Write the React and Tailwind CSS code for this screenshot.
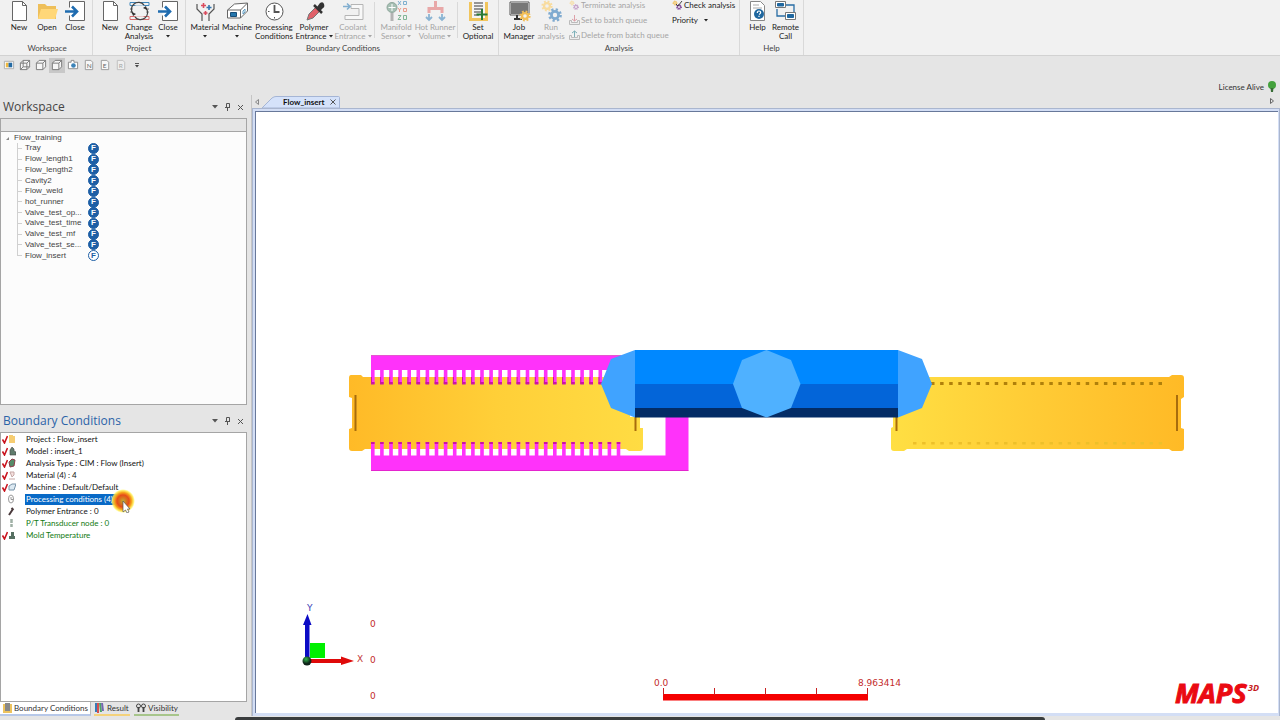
const sans = "font-['Lato','Open_Sans',sans-serif]";
const titleFont = "font-['Open_Sans','Noto_Sans',sans-serif]";

const models = [
  'Tray',
  'Flow_length1',
  'Flow_length2',
  'Cavity2',
  'Flow_weld',
  'hot_runner',
  'Valve_test_op...',
  'Valve_test_time',
  'Valve_test_mf',
  'Valve_test_se...',
  'Flow_insert'
];

const conditions = [
  { label: 'Project : Flow_insert', icon: 'folder', done: true },
  { label: 'Model : insert_1', icon: 'model', done: true },
  { label: 'Analysis Type : CIM : Flow (Insert)', icon: 'type', done: true },
  { label: 'Material (4) : 4', icon: 'material', done: true },
  { label: 'Machine : Default/Default', icon: 'machine', done: true },
  { label: 'Processing conditions (4) : 0', icon: 'clock', selected: true },
  { label: 'Polymer Entrance : 0', icon: 'dropper' },
  { label: 'P/T Transducer node : 0', icon: 'sensor', optional: true },
  { label: 'Mold Temperature', icon: 'mold', done: true, optional: true }
];

const Gear = ({ cx, cy, r, color, hole = '#f1f1f1' }) => (
  <g>
    <circle cx={cx} cy={cy} r={r} fill="none" stroke={color} strokeWidth={r * 0.5} strokeDasharray={`${r * 0.4} ${r * 0.385}`} />
    <circle cx={cx} cy={cy} r={r * 0.65} fill={hole} stroke={color} strokeWidth={r * 0.5} />
  </g>
);

const bigIcons = {
  page: (
    <g fill="#fff" stroke="#666">
      <path d="M4.500 1.500h10l4 4v15h-14z" />
      <path d="M14.500 1.500v4h4" fill="none" />
    </g>
  ),
  folder: (
    <g>
      <path d="M2 4h7l2 2h9v13H2z" fill="#eebf5a" />
      <path d="M5 9h17l-3 10H2z" fill="#ffd778" />
    </g>
  ),
  exit: (
    <g>
      <path d="M5.500 7.500v-6h15v19h-15v-5" fill="#fff" stroke="#666" />
      <path d="M1 11.500h11M8 6.500l5 5-5 5" fill="none" stroke="#1f6cb0" strokeWidth="2.600" />
    </g>
  ),
  change: (
    <g fill="none">
      <path d="M2 2.500h19v3H2z" stroke="#3f86ba" />
      <path d="M2 9h3M18 9h3M2 12h3M18 12h3" stroke="#777" />
      <path d="M2 16.500h19v3H2z" stroke="#d66c6c" />
      <circle cx="11.500" cy="11" r="7" fill="#f1f1f1" fillOpacity=".7" />
      <path d="M5 14a7 7 0 0 1 11-9M18 8a7 7 0 0 1-11 9" stroke="#444" strokeWidth="1.200" />
      <path d="M4 12l4 2-3 2zM19 10l-4-2 3-2z" fill="#333" />
    </g>
  ),
  material: (
    <g fill="none" stroke="#555">
      <path d="M3 4v5l5 5v7M20 4v5l-5 5v7" strokeWidth="1.200" />
      <path d="M9.500 3v5M7 5.500h5M11.500 11v4M9.500 13h4" stroke="#d94b5d" strokeWidth="1.600" />
      <path d="M15 5v5M12.500 7.500h5" stroke="#3275ad" strokeWidth="1.600" />
    </g>
  ),
  machine: (
    <g fill="#fff" stroke="#666">
      <path d="M1.500 10l7-6 13-1v8l-7 7h-13z" />
      <path d="M1.500 10h13v8M14.500 10l7-7" fill="none" />
      <path d="M4.500 12.500h6v4h-6z" fill="#2476ad" stroke="#174d78" />
      <path d="M17 11l2-2v3l-2 2z" stroke="#5e9cc2" />
    </g>
  ),
  clock: (
    <g fill="#fff" stroke="#555">
      <circle cx="11.500" cy="11.500" r="8.500" />
      <path d="M11.500 5v7h5" fill="none" strokeWidth="1.800" />
      <path d="M11.500 17v1.500M5 11.500h1.500" />
    </g>
  ),
  dropper: (
    <g>
      <path d="M4 20l2-6 7-7 4 4-7 7z" fill="#e0616a" stroke="#777" />
      <path d="M11 5l8 8" stroke="#333" strokeWidth="2.500" />
      <path d="M14 7l3-4q3-2 4 1t-1 4l-3 3z" fill="#333" />
    </g>
  ),
  coolant: (
    <g fill="none" stroke="#b5b5b5">
      <path d="M9 4.500h12v15H3v-4h14v-7H9z" fill="#f8f8f8" />
      <path d="M1 6.500h6M5 3.500l3 3-3 3" stroke="#82afd0" strokeWidth="1.600" />
    </g>
  ),
  manifold: (
    <g fill="none">
      <circle cx="7" cy="7.500" r="5" fill="#a5bfb3" stroke="#8fa79c" />
      <path d="M7 4v7M3.500 7.500h7" stroke="#fff" />
      <path d="M5.500 13h3v8h-3z" fill="#b3b3b3" />
      <path d="M13 1l3 4M16 1l-3 4M18.500 1.500h3v3h-3z" stroke="#7fb0ce" />
      <path d="M13 8l1.500 2L16 8M14.500 10v2M18.500 8.500h3v3h-3z" stroke="#e89c8c" />
      <path d="M13 15.500h3l-3 4h3M18.500 15.500h3v4h-3z" stroke="#82b596" />
    </g>
  ),
  runner: (
    <g fill="none">
      <path d="M11.500 1v7M5 13V8.500h13V13" stroke="#e8a8a8" strokeWidth="3" />
      <path d="M5 14v6M2 17l3 3 3-3M18 14v6M15 17l3 3 3-3" stroke="#8ab4d3" strokeWidth="1.800" />
    </g>
  ),
  optional: (
    <g>
      <path d="M2 2h19v19H2z" fill="#f1c55c" />
      <path d="M5 0h13v18H5z" fill="#f5f5f5" />
      <path d="M7 3h9M7 6h9M7 9h9M7 12h7M7 15h5" stroke="#777" strokeWidth="1.500" />
      <path d="M15 9v11M9.500 14.500h11" stroke="#287a35" strokeWidth="2" />
    </g>
  ),
  job: (
    <g>
      <path d="M2.500 2.500h18v12h-18z" fill="#777" stroke="#fff" />
      <path d="M2 2h19v13H2z" fill="none" stroke="#555" />
      <path d="M9 15v4M6 19h8" stroke="#333" strokeWidth="2" />
      <Gear cx={17} cy={16} r={4.5} color="#f3bf57" />
    </g>
  ),
  run: (
    <g>
      <Gear cx={7} cy={6} r={4.5} color="#f8dca0" />
      <Gear cx={15} cy={15} r={5.5} color="#80abd0" />
    </g>
  ),
  help: (
    <g>
      <path d="M4.500 1.500h10l4 4v15h-14z" fill="#fff" stroke="#888" />
      <path d="M7 5h6M7 8h9" stroke="#aaa" />
      <circle cx="13" cy="14" r="5" fill="#1f679f" />
      <path d="M11.300 13q0-2 1.700-2t1.700 1.500q0 1-1.700 2M13 15.800v1.200" fill="none" stroke="#fff" strokeWidth="1.200" />
    </g>
  ),
  remote: (
    <g stroke="#777" fill="#fff">
      <path d="M12 5h8v7M3 9v7h8" fill="none" stroke="#286da5" strokeWidth="1.300" />
      <path d="M1.500 1.500h10v6h-10zM11.500 12.500h10v7h-10z" />
      <path d="M3.500 3.500h6v2.500h-6zM13.500 14.500h6v3h-6z" fill="#1f679f" stroke="#1f679f" />
    </g>
  )
};

const BigIcon = ({ name }) => (
  <svg viewBox="0 0 23 22" className="h-[22px] w-[23px] shrink-0" aria-hidden="true">
    {bigIcons[name]}
  </svg>
);

const Caret = () => (
  <svg viewBox="0 0 4 3" className="inline-block h-[3px] w-1 shrink-0" aria-hidden="true">
    <path d="M0 0h4L2 2.500z" fill="currentColor" />
  </svg>
);

const RibbonButton = ({ icon, label, second, width, menu, disabled }) => (
  <button
    type="button"
    disabled={disabled}
    className={`flex shrink-0 flex-col items-center text-[8px] leading-[9px] whitespace-nowrap ${width} ${
      disabled ? 'text-[#a5a5a5]' : 'text-[#222]'
    }`}
  >
    <BigIcon name={icon} />
    <span className="mt-px">{label}</span>
    <span className="flex h-[9px] items-center gap-0.5">
      {second}
      {menu && <Caret />}
    </span>
  </button>
);

const RibbonGroup = ({ title, width, children }) => (
  <section className={`flex h-[55px] shrink-0 flex-col border-r border-[#d9d9d9] ${width}`}>
    <div className="flex h-[42px] justify-center">{children}</div>
    <h2 className="text-center text-[8px] leading-[12px] text-[#444]">{title}</h2>
  </section>
);

const RibbonDivider = () => <div className="mx-[2px] mt-0.5 h-9 w-px shrink-0 bg-[#d9d9d9]" />;

const TinyIcon = ({ kind }) => (
  <svg viewBox="0 0 11 10" className="h-2.5 w-[11px] shrink-0" aria-hidden="true">
    {kind === 'gears' && (
      <>
        <Gear cx={3} cy={3} r={2} color="#f8dca0" />
        <Gear cx={7} cy={7} r={2.4} color="#c7a5cb" />
      </>
    )}
    {kind === 'check' && (
      <>
        <Gear cx={3} cy={3} r={2} color="#f1bd4c" />
        <Gear cx={7} cy={7} r={2.4} color="#8953a0" />
        <path d="M4 4l2 2 4-5" fill="none" stroke="#444" />
      </>
    )}
    {(kind === 'set' || kind === 'delete') && (
      <>
        <path d="M.500 5.500h2v2h6v-2h2v4H.500z" fill="#eee" stroke="#bbb" />
        {kind === 'set' ? (
          <path d="M5.500 0v6M3 4l2.500 2L8 4" fill="none" stroke="#dda0a8" />
        ) : (
          <path d="M5.500 7V1M3 3l2.500-2L8 3" fill="none" stroke="#7db0b8" />
        )}
      </>
    )}
  </svg>
);

const Ribbon = () => (
  <header className="flex h-14 shrink-0 border-b border-[#d2d2d2] bg-[#f1f1f1]">
    <RibbonGroup title="Workspace" width="w-[93px] pl-0.5">
      <RibbonButton icon="page" label="New" width="w-7" />
      <RibbonButton icon="folder" label="Open" width="w-7" />
      <RibbonButton icon="exit" label="Close" width="w-7" />
    </RibbonGroup>
    <RibbonGroup title="Project" width="w-[93px]">
      <RibbonButton icon="page" label="New" width="w-7" />
      <RibbonButton icon="change" label="Change" second="Analysis" width="w-[30px]" />
      <RibbonButton icon="exit" label="Close" width="w-7" menu />
    </RibbonGroup>
    <RibbonGroup title="Boundary Conditions" width="w-[313px] pl-0.5">
      <RibbonButton icon="material" label="Material" width="w-[30px]" menu />
      <RibbonButton icon="machine" label="Machine" width="w-[34px]" menu />
      <RibbonButton icon="clock" label="Processing" second="Conditions" width="w-10" />
      <RibbonButton icon="dropper" label="Polymer" second="Entrance" width="w-10" menu />
      <RibbonButton icon="coolant" label="Coolant" second="Entrance" width="w-[38px]" menu disabled />
      <RibbonDivider />
      <RibbonButton icon="manifold" label="Manifold" second="Sensor" width="w-[38px]" menu disabled />
      <RibbonButton icon="runner" label="Hot Runner" second="Volume" width="w-10" menu disabled />
      <RibbonDivider />
      <RibbonButton icon="optional" label="Set" second="Optional" width="w-9" />
    </RibbonGroup>
    <RibbonGroup title="Analysis" width="w-[241px]">
      <RibbonButton icon="job" label="Job" second="Manager" width="w-[34px]" />
      <RibbonButton icon="run" label="Run" second="analysis" width="w-[30px]" disabled />
      <div className="flex w-[106px] flex-col gap-[5px] pl-[3px] text-[8px] leading-[10px] whitespace-nowrap text-[#a5a5a5]">
        <button type="button" disabled className="flex gap-px"><TinyIcon kind="gears" />Terminate analysis</button>
        <button type="button" disabled className="flex gap-px"><TinyIcon kind="set" />Set to batch queue</button>
        <button type="button" disabled className="flex gap-px"><TinyIcon kind="delete" />Delete from batch queue</button>
      </div>
      <div className="flex w-16 flex-col gap-[5px] text-[8px] leading-[10px] whitespace-nowrap text-[#222]">
        <button type="button" className="flex gap-px"><TinyIcon kind="check" />Check analysis</button>
        <button type="button" className="flex items-center gap-1.5">Priority <Caret /></button>
      </div>
    </RibbonGroup>
    <RibbonGroup title="Help" width="w-16">
      <RibbonButton icon="help" label="Help" width="w-7" />
      <RibbonButton icon="remote" label="Remote" second="Call" width="w-7" />
    </RibbonGroup>
  </header>
);

const Cube = ({ inner }) => (
  <g fill="#f6f6f6" stroke="#777">
    <path d="M1.500 4.500l3-3h7v7l-3 3h-7z" />
    <path d="M1.500 4.500h7v7M8.500 4.500l3-3" fill="none" />
    {inner && <path d="M4.500 1.500v7h7M1.500 11.500l3-3" fill="none" />}
  </g>
);

const Note = ({ letter, faded }) => (
  <g opacity={faded ? 0.5 : 1}>
    <path d="M2.500 1.500h6l2 2v8h-8z" fill="#f7f7f7" stroke="#999" />
    <text x="4" y="10" fontSize="7" fill="#666">{letter}</text>
  </g>
);

const viewTools = [
  {
    label: 'Contour',
    art: (
      <g>
        <path d="M1.500 2.500h10v8h-10z" fill="#fff" stroke="#aaa" />
        <path d="M3 4h3v5H3z" fill="#efb83e" />
        <path d="M6 4h4v5H6z" fill="#246aa3" />
      </g>
    )
  },
  { label: 'Wireframe', art: <Cube inner /> },
  { label: 'Hidden line', art: <Cube /> },
  { label: 'Shaded', art: <Cube />, active: true },
  {
    label: 'Capture',
    art: (
      <g>
        <path d="M1.500 3.500h3v-2h3v2h4v7h-10z" fill="#fff" stroke="#888" />
        <circle cx="7" cy="7" r="2.500" fill="#3c83b8" />
      </g>
    )
  },
  { label: 'Nodes', art: <Note letter="N" /> },
  { label: 'Elements', art: <Note letter="E" /> },
  { label: 'Regions', art: <Note letter="R" faded /> }
];

const ViewToolbar = () => (
  <div className="flex h-[18px] shrink-0 items-center pl-px" role="toolbar" aria-label="View">
    {viewTools.map((tool) => (
      <button
        key={tool.label}
        type="button"
        aria-label={tool.label}
        className={`flex h-[15px] w-4 items-center justify-center ${tool.active ? 'bg-[#c8c8c8]' : ''}`}
      >
        <svg viewBox="0 0 13 13" className="h-3 w-3" aria-hidden="true">{tool.art}</svg>
      </button>
    ))}
    <button type="button" aria-label="Customize" className="flex w-4 flex-col items-center gap-px text-[#444]">
      <span className="h-px w-1 bg-[#555]" />
      <Caret />
    </button>
  </div>
);

const PanelHeader = ({ title, active }) => (
  <div className="flex shrink-0 items-center justify-between pl-[3px]">
    <h2 className={`text-[12px] leading-[22px] ${titleFont} ${active ? 'text-[#2b63a8]' : 'text-[#444]'}`}>{title}</h2>
    <div className="flex text-[#555]">
      <button type="button" aria-label="Panel menu" className="flex h-3 w-[13px] items-center justify-center">
        <svg viewBox="0 0 6 4" className="h-1 w-1.5"><path d="M0 0h6L3 3.500z" fill="currentColor" /></svg>
      </button>
      <button type="button" aria-label="Pin panel" className="flex h-3 w-[13px] items-center justify-center">
        <svg viewBox="0 0 7 8" className="h-2 w-[7px]" fill="none" stroke="currentColor">
          <path d="M2.500 .500h3v4h-3zM1 4.500h5M3.500 5v3" />
        </svg>
      </button>
      <button type="button" aria-label="Close panel" className="flex h-3 w-[13px] items-center justify-center">
        <svg viewBox="0 0 7 7" className="h-[7px] w-[7px]" stroke="currentColor"><path d="M1 1l5 5M6 1L1 6" /></svg>
      </button>
    </div>
  </div>
);

const WorkspacePanel = () => (
  <section className="flex h-[309px] shrink-0 flex-col">
    <PanelHeader title="Workspace" />
    <div className="flex min-h-0 flex-1 flex-col border border-[#a5a5a5] bg-[#fcfcfc]">
      <div className="h-[13px] shrink-0 border-b border-[#a5a5a5] bg-[#e5e5e5]" />
      <div className="pt-px font-['Liberation_Sans',sans-serif] text-[8px] text-[#444]">
        <div className="flex items-center pl-1 leading-[10px]">
          <svg viewBox="0 0 5 5" className="mr-1 h-[5px] w-[5px]"><path d="M4 1v3H1z" fill="#888" /></svg>
          Flow_training
        </div>
        <ul className="ml-4 grid h-[118px] auto-rows-fr">
          {models.map((name, i) => {
            const last = i === models.length - 1;
            return (
              <li key={name} className="flex items-center">
                <span className={`w-px bg-[#d0d0d0] ${last ? 'h-1/2 self-start' : 'h-full'}`} />
                <span className="mr-[3px] h-px w-1 bg-[#d0d0d0]" />
                <span className="w-[63px] whitespace-nowrap">{name}</span>
                <span
                  className={`flex size-[11px] items-center justify-center rounded-full border border-[#1d5ea5] text-[8px] leading-none font-bold ${
                    last ? 'bg-white text-[#1d5ea5]' : 'bg-[#1d5ea5] text-white'
                  }`}
                >
                  F
                </span>
              </li>
            );
          })}
        </ul>
      </div>
    </div>
  </section>
);

const smallIcons = {
  folder: <path d="M1 1h4v1h2v7H1z" fill="#f6cd72" />,
  model: <path d="M2 9V4l2-3 2 2v2l2 1v3z" fill="#607c6d" stroke="#444" strokeWidth=".6" />,
  type: <path d="M2 9l-1-5 3-3 3 1-1 6z" fill="#568b68" stroke="#8d3c49" />,
  material: <path d="M1 9h6M2 2h4v3L4 7z" fill="#f6e1df" stroke="#c5a7a5" />,
  machine: <path d="M1 4l3-2h4L6 8H1z" fill="#dce9f2" stroke="#7893a8" />,
  clock: (
    <g fill="#fff" stroke="#999">
      <ellipse cx="3" cy="5" rx="2.500" ry="4" />
      <path d="M3 3v2.500h2" />
    </g>
  ),
  dropper: <path d="M1 9l4-6M3.500 2l2 2" stroke="#4a3a3c" strokeWidth="2" />,
  sensor: <path d="M3.500 1v4M3.500 6v3" stroke="#9fb0a5" strokeWidth="2.500" />,
  mold: <path d="M1 9V6h2V2h3v4h1v3z" fill="#567062" />
};

const ClickPointer = () => (
  <svg viewBox="0 0 24 24" className="pointer-events-none absolute top-[-4px] left-[110px] size-6" aria-hidden="true">
    <defs>
      <radialGradient id="glow">
        <stop offset="0" stopColor="#b9ad3c" />
        <stop offset=".25" stopColor="#d47a20" />
        <stop offset=".5" stopColor="#e64c1a" />
        <stop offset=".72" stopColor="#f7a81c" />
        <stop offset=".88" stopColor="#ffe94a" stopOpacity=".8" />
        <stop offset="1" stopColor="#ffff70" stopOpacity="0" />
      </radialGradient>
    </defs>
    <circle cx="12" cy="12" r="12" fill="url(#glow)" />
    <path d="M12 12v11l2.500-2 1.500 3 2-1-1.500-3H19z" fill="#fff" stroke="#555" strokeWidth=".7" />
  </svg>
);

const ConditionsPanel = () => (
  <section className="mt-[5px] flex min-h-0 flex-1 flex-col">
    <PanelHeader title="Boundary Conditions" active />
    <ul className="flex-1 border border-[#a5a5a5] bg-white text-[8px] leading-[12px] text-[#111]">
      {conditions.map((item) => (
        <li key={item.label} className="relative flex h-3 items-center pl-px">
          <svg viewBox="0 0 6 9" className="h-[9px] w-1.5 shrink-0" fill="none" aria-hidden="true">
            {item.done && <path d="M.500 4.500l2 3.500L5.500 1" stroke="#c9131d" strokeWidth="1.600" />}
          </svg>
          <svg viewBox="0 0 8 10" className="h-2.5 w-2 shrink-0" fill="none" aria-hidden="true">
            {smallIcons[item.icon]}
          </svg>
          <span
            className={`ml-[9px] px-px whitespace-nowrap ${
              item.selected ? 'bg-[#0869c6] leading-[11px] text-white' : item.optional ? 'text-[#107a10]' : ''
            }`}
          >
            {item.label}
          </span>
          {item.selected && <ClickPointer />}
        </li>
      ))}
    </ul>
  </section>
);

const PanelTabs = () => (
  <nav className="flex h-[14px] shrink-0 text-[8px] leading-[12px] whitespace-nowrap text-[#333]">
    <button type="button" className="flex w-[91px] items-center gap-0.5 border-r border-b-2 border-r-[#bbb] border-b-[#b7c8e8] bg-white pl-[3px]">
      <svg viewBox="0 0 9 10" className="h-2.5 w-[9px] shrink-0"><path d="M0 1h9v9H0z" fill="#edc35e" /><path d="M2 0h5v8H2z" fill="#888" /></svg>
      Boundary Conditions
    </button>
    <button type="button" className="ml-[3px] flex w-9 items-center gap-[3px] border-b-2 border-[#f4d27b] pl-px">
      <svg viewBox="0 0 9 10" className="h-2.5 w-[9px] shrink-0">
        <path d="M1 0v9" stroke="#367cb8" strokeWidth="2" />
        <path d="M3 0v10" stroke="#d85050" strokeWidth="2" />
        <path d="M5 0l1 9" stroke="#4ba367" strokeWidth="2" />
        <path d="M7 0l1 8" stroke="#7565b0" strokeWidth="2" />
      </svg>
      Result
    </button>
    <button type="button" className="ml-1 flex w-[45px] items-center gap-0.5 border-b-2 border-[#a7c58b] pl-0.5">
      <svg viewBox="0 0 10 10" className="h-2.5 w-2.5 shrink-0" fill="none" stroke="#444">
        <circle cx="2.500" cy="3" r="2" />
        <circle cx="7.500" cy="3" r="2" />
        <path d="M2.500 4v5M7.500 4v5" strokeWidth="1.800" />
      </svg>
      Visibility
    </button>
  </nav>
);

const PITCH = 9.1;
const upperTeeth = Array.from({ length: 26 }, (_, i) => 371 + i * PITCH);
const lowerTeeth = Array.from({ length: 28 }, (_, i) => 371 + i * PITCH);
const upperDots = Array.from({ length: 26 }, (_, i) => 931 + i * PITCH);
const lowerDots = Array.from({ length: 28 }, (_, i) => 913 + i * PITCH);

const Scene = () => (
  <svg viewBox="256 112 1022 601" preserveAspectRatio="xMinYMin meet" className="block h-full w-full" role="img" aria-label="Flow_insert model">
    <defs>
      <linearGradient id="plateLeft">
        <stop offset="0" stopColor="#ffba27" />
        <stop offset=".5" stopColor="#ffcf38" />
        <stop offset="1" stopColor="#ffdc43" />
      </linearGradient>
      <linearGradient id="plateRight">
        <stop offset="0" stopColor="#ffdf43" />
        <stop offset=".5" stopColor="#ffcb35" />
        <stop offset="1" stopColor="#ffba26" />
      </linearGradient>
      <radialGradient id="ball" cx=".4" cy=".3">
        <stop offset="0" stopColor="#32b94a" />
        <stop offset="1" stopColor="#10231a" />
      </radialGradient>
    </defs>

    {/* moulded parts */}
    <path d="M351 375h10l2 2h267v51h13v20q0 3-3 3h-11l-3-2H365l-3 2h-10q-3 0-3-3v-19l3-1v-30l-3-1v-19q0-3 2-3z" fill="url(#plateLeft)" />
    <path d="M630 417h10v12h-10z" fill="#ffdc43" />
    <path d="M893 417h7v-40h269l3-2h9q3 0 3 3v19l-3 2v29l3 1v19q0 3-3 3h-9l-3-2H907l-3 2h-10q-3 0-3-3v-20l2-1z" fill="url(#plateRight)" />
    <path d="M355.500 395v36M635.500 417v14M896.500 417v14M1177 395v36" stroke="#a86c0d" strokeWidth="2" />

    {upperDots.map((x) => <rect key={x} x={x} y="382" width="3.500" height="3" fill="#b0800b" />)}
    {lowerDots.map((x) => <rect key={x} x={x} y="442" width="3.500" height="2.500" fill="#edc02a" />)}

    {/* comb runner */}
    <g fill="#ff32fa">
      <path d="M371 355.500h260V370H371zM371 455.500h294.500V417h23v54H371z" />
      {upperTeeth.map((x) => <rect key={x} x={x} y="370" width="3.600" height="14" />)}
      {lowerTeeth.map((x) => <rect key={x} x={x} y="442" width="3.600" height="14" />)}
    </g>
    <g fill="#c916a2">
      {upperTeeth.map((x) => <rect key={x} x={x} y="377" width="1" height="7" />)}
      {upperTeeth.map((x) => <rect key={x} x={x} y="382" width="3.600" height="2.500" />)}
      {lowerTeeth.map((x) => <rect key={x} x={x} y="442" width="3.600" height="2" />)}
      <path d="M371 355h250v.500H371zM371 470.500h317.500v.500H371z" />
    </g>

    {/* insert body */}
    <path d="M635 350h263v34H635z" fill="#0088ff" />
    <path d="M635 384h263v24H635z" fill="#0365d9" />
    <path d="M635 408h263v9.500H635z" fill="#032c66" />
    <path d="M635 350l-24 9-10 25 10 24 24 9.500zM898 350l24 9 10 25-10 24-24 9.500z" fill="#40a3ff" />
    <path d="M766.500 350l24.500 10 9.500 24-9.500 24-24.500 9.500L742 408l-9-24 9-24z" fill="#4fb1ff" />

    {/* axis triad */}
    <path d="M310 643h15v15h-15z" fill="#00f000" />
    <path d="M305 661v-36h-2l4.500-11 4 11h-2v36z" fill="#0b0bc5" />
    <path d="M307 659h34v-2.500l13 4.500-13 4v-2h-34z" fill="#df0909" />
    <circle cx="307" cy="661" r="4.500" fill="url(#ball)" />
    <g fontFamily="'DejaVu Sans', sans-serif" fontSize="9">
      <text x="307" y="611" fill="#3b3bb5">Y</text>
      <text x="357" y="662" fill="#c33a3a">X</text>
      <g fill="#c32b2b">
        <text x="370" y="627">0</text>
        <text x="370" y="663">0</text>
        <text x="370" y="699">0</text>
        <text x="654" y="686">0.0</text>
        <text x="858" y="686">8.963414</text>
      </g>
    </g>

    <path d="M663 694h205v6.500H663z" fill="#f50000" />
    <path d="M663.500 688v7M714.500 688v7M765.500 688v7M816.500 688v7M867.500 688v7" stroke="#c82020" />

    <g fontFamily="'Open Sans', sans-serif" fontWeight="700" fontStyle="italic">
      <text x="1175" y="703" fontSize="27" fill="#ea0a12" stroke="#ea0a12">MAPS</text>
      <text x="1248" y="691" fontSize="9" fill="#c41a20">3D</text>
    </g>
  </svg>
);

const DocumentArea = () => (
  <main className="flex min-w-0 flex-1 flex-col border-l border-[#c5c5c5]">
    <div className="flex h-[13px] shrink-0 items-end justify-between">
      <div className="flex items-end">
        <button type="button" aria-label="Previous tab" className="flex h-[13px] w-2.5 items-center justify-center">
          <svg viewBox="0 0 4 6" className="h-1.5 w-1" fill="none" stroke="#888"><path d="M3.500 .500v5L.500 3z" /></svg>
        </button>
        <div className="relative flex h-3 w-[78px] items-center pl-[21px] text-[8px] font-bold text-[#111]">
          <svg viewBox="0 0 78 12" className="absolute inset-0 h-full w-full" aria-hidden="true">
            <path d="M0 12L10 2q2-1.500 4-1.500h62.500q1 0 1 1V12z" fill="#d5e2fa" stroke="#a5b5d5" />
          </svg>
          <span className="relative leading-[12px]">Flow_insert</span>
          <button type="button" aria-label="Close Flow_insert" className="relative ml-auto pr-1">
            <svg viewBox="0 0 6 6" className="size-1.5" stroke="#555"><path d="M.500 .500l5 5M5.500 .500l-5 5" /></svg>
          </button>
        </div>
      </div>
      <button type="button" aria-label="Next tab" className="flex w-4 items-center justify-center pb-1">
        <svg viewBox="0 0 4 6" className="h-1.5 w-1" fill="none" stroke="#666"><path d="M.500 .500v5l3-2.500z" /></svg>
      </button>
    </div>
    <div className="min-h-0 flex-1 border-t border-r border-l border-[#aab6cf] bg-[#d3def5] pt-[2px] pr-px pb-[3px] pl-[2px]">
      <div className="h-full border-t border-l border-[#68789a] bg-white">
        <Scene />
      </div>
    </div>
  </main>
);

const App = () => (
  <div className={`flex h-screen flex-col overflow-hidden bg-[#e5e5e5] ${sans}`}>
    <Ribbon />
    <ViewToolbar />
    <div className="flex h-[21px] shrink-0 items-center justify-end gap-1 pt-1 pr-1 text-[8px] text-[#333]">
      License Alive
      <svg viewBox="0 0 8 11" className="h-[11px] w-2" aria-hidden="true">
        <circle cx="4" cy="4" r="4" fill="#44a13d" />
        <path d="M2.500 7h3l-.5 4H3z" fill="#386d36" />
      </svg>
    </div>
    <div className="flex min-h-0 flex-1">
      <aside className="mr-1 flex w-[247px] shrink-0 flex-col pt-px">
        <WorkspacePanel />
        <ConditionsPanel />
        <PanelTabs />
      </aside>
      <DocumentArea />
    </div>
    <footer className="flex h-1 shrink-0 items-end">
      <div className="mr-auto ml-[235px] h-[3px] w-[810px] rounded-t bg-[#3a3d3e]" />
    </footer>
  </div>
);

export default App;
